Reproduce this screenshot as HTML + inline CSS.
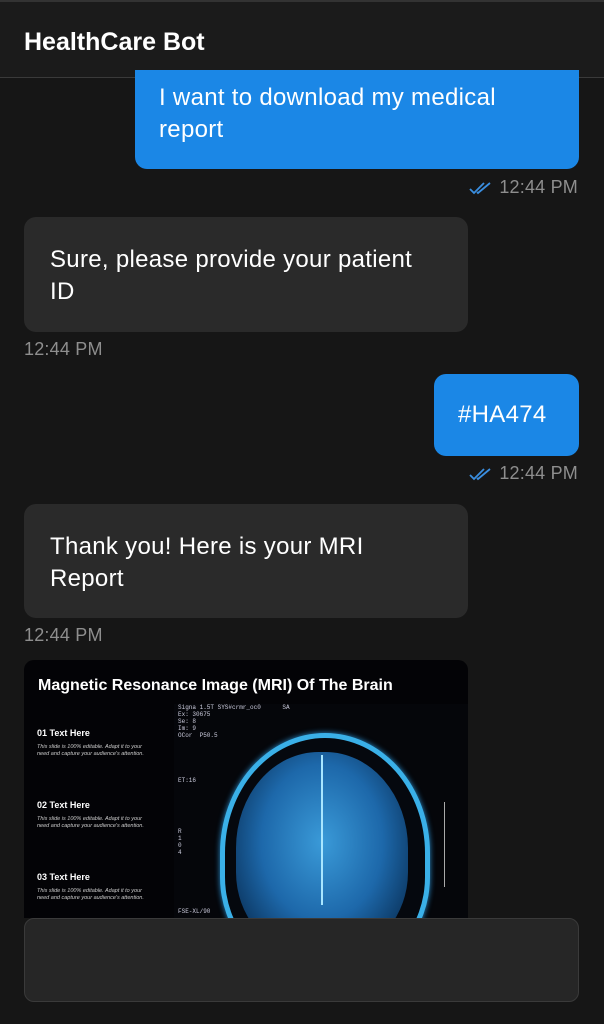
<!DOCTYPE html><html><head><style>
body{margin:0;width:604px;height:1024px;background:#161616;font-family:"Liberation Sans",sans-serif;position:relative;overflow:hidden;color:#fff}
.hdr{position:absolute;top:0;left:0;width:604px;height:78px;background:#1b1b1b;border-bottom:1px solid #3a3a3a;border-top:2px solid #333;box-sizing:border-box}
.hdr span{position:absolute;left:24px;top:26px;font-size:25px;font-weight:bold}
.b{position:absolute;font-size:24px;line-height:32px;box-sizing:border-box;letter-spacing:0.3px}
.u{background:#1b87e6;border-radius:12px}
.g{background:#2a2a2a;border-radius:12px}
.t{position:absolute;font-size:18px;color:#8e8e8e;letter-spacing:0.2px}
.ck{display:inline-block;vertical-align:-2px;margin-right:6px}
.img{position:absolute;left:24px;top:660px;width:444px;height:258px;background:#030306;border-radius:10px 10px 0 0;overflow:hidden}
.sm{position:absolute;left:13px;font-size:9px;font-weight:bold}
.sd{position:absolute;left:13px;font-size:5.5px;font-style:italic;color:#ccc;line-height:7px}
.mono{position:absolute;font-family:"Liberation Mono",monospace;font-size:6px;color:#ccd;line-height:7px}
</style></head><body>
<div class="hdr"><span>HealthCare Bot</span></div>
<div class="b u" style="left:135px;top:70px;width:444px;height:99px;border-radius:0 0 12px 12px;padding:12px 24px">I want to download my medical report</div>
<div class="t" style="right:26px;top:177px"><svg class="ck" width="24" height="14" viewBox="0 0 24 14"><path d="M1 8l4 4L15 2M8 11l1 1L21 2" fill="none" stroke="#3a8ee0" stroke-width="1.8"/></svg>12:44 PM</div>
<div class="b g" style="left:24px;top:217px;width:444px;height:115px;padding:27px 40px 27px 26px">Sure, please provide your patient ID</div>
<div class="t" style="left:24px;top:339px">12:44 PM</div>
<div class="b u" style="left:434px;top:374px;width:145px;height:82px;padding:25px 24px">#HA474</div>
<div class="t" style="right:26px;top:463px"><svg class="ck" width="24" height="14" viewBox="0 0 24 14"><path d="M1 8l4 4L15 2M8 11l1 1L21 2" fill="none" stroke="#3a8ee0" stroke-width="1.8"/></svg>12:44 PM</div>
<div class="b g" style="left:24px;top:504px;width:444px;height:114px;padding:27px 60px 27px 26px">Thank you! Here is your MRI Report</div>
<div class="t" style="left:24px;top:625px">12:44 PM</div>
<div class="img">
<div style="position:absolute;left:14px;top:17px;font-size:16px;font-weight:bold">Magnetic Resonance Image (MRI) Of The Brain</div>
<div style="position:absolute;left:150px;top:44px;width:294px;height:214px;background:#05060a"></div>
<div class="sm" style="top:68px">01 Text Here</div><div class="sd" style="top:84px">This slide is 100% editable. Adapt it to your<br>need and capture your audience's attention.</div>
<div class="sm" style="top:140px">02 Text Here</div><div class="sd" style="top:156px">This slide is 100% editable. Adapt it to your<br>need and capture your audience's attention.</div>
<div class="sm" style="top:212px">03 Text Here</div><div class="sd" style="top:228px">This slide is 100% editable. Adapt it to your<br>need and capture your audience's attention.</div>
<div class="mono" style="left:154px;top:44px">Signa 1.5T SYS#crmr_oc0 &nbsp;&nbsp;&nbsp;&nbsp;&nbsp;SA<br>Ex: 30675<br>Se: 8<br>Im: 9<br>OCor &nbsp;P50.5</div>
<div class="mono" style="left:154px;top:117px">ET:16</div>
<div class="mono" style="left:154px;top:168px">R<br>1<br>0<br>4</div>
<div class="mono" style="left:154px;top:248px">FSE-XL/90</div>
<div style="position:absolute;left:196px;top:73px;width:200px;height:230px;border-radius:50% 50% 40% 40%;border:5px solid #3ab0e8;box-shadow:0 0 6px #2a8fd0;background:#05080e"></div>
<div style="position:absolute;left:212px;top:92px;width:172px;height:200px;border-radius:48% 48% 40% 40%;background:radial-gradient(ellipse at 50% 45%,#3a9ad8 0%,#1d68aa 50%,#0d3a66 80%,#071c33 100%)"></div>
<div style="position:absolute;left:297px;top:95px;width:2px;height:150px;background:#a8e6ff"></div>
<div style="position:absolute;left:420px;top:142px;width:1px;height:85px;background:#aaa"></div>
</div>
<div style="position:absolute;left:24px;top:918px;width:555px;height:84px;background:#262626;border:1px solid #3a3a3a;border-radius:10px;box-sizing:border-box"></div>
</body></html>
